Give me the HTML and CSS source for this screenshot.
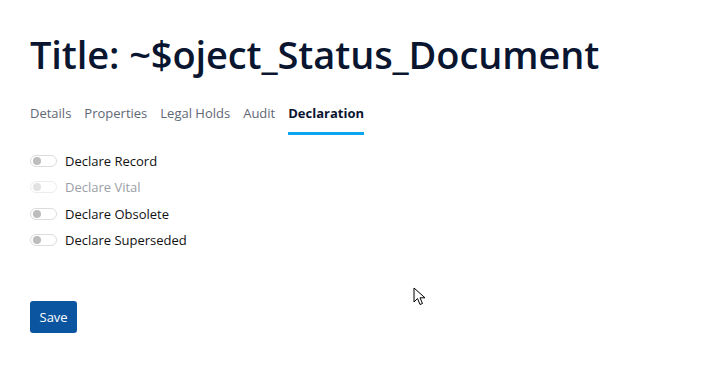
FILE: index.html
```html
<!DOCTYPE html>
<html lang="en">
<head>
<meta charset="UTF-8" />
<meta name="viewport" content="width=device-width, initial-scale=1" />
<title>Declaration</title>
<link rel="stylesheet" href="styles.css">
</head>
<body>

<div class="page">
  <h1 class="title">Title: ~$oject_Status_Document</h1>

  <div class="tabs">
    <span class="tab">Details</span>
    <span class="tab">Properties</span>
    <span class="tab">Legal Holds</span>
    <span class="tab">Audit</span>
    <span class="tab active">Declaration</span>
  </div>

  <div class="toggles">
    <label class="toggle-row"><span class="switch"></span>Declare Record</label>
    <label class="toggle-row disabled"><span class="switch"></span>Declare Vital</label>
    <label class="toggle-row"><span class="switch"></span>Declare Obsolete</label>
    <label class="toggle-row"><span class="switch"></span>Declare Superseded</label>
  </div>

  <button class="save-btn">Save</button>
</div>

<svg class="cursor" width="14" height="20" viewBox="0 0 14 20">
  <path d="M1 1 L1 15 L4.5 11.5 L7 17.5 L9.5 16.5 L7 10.8 L12 10.8 Z" fill="#fff" stroke="#000" stroke-width="1" stroke-linejoin="round"/>
</svg>

</body>
</html>
```

FILE: styles.css
```css
body {
  margin: 0;
  font-family: "Open Sans", "Noto Sans", sans-serif;
  background: #fff;
  color: #1b1b1b;
}
.page {
  padding: 28px 30px;
}
.title {
  font-size: 38px;
  font-weight: 600;
  line-height: 52px;
  margin: 0 0 24px;
  color: #0a1530;
  letter-spacing: -0.1px;
}
.tabs {
  display: flex;
  gap: 13px;
  font-size: 13px;
}
.tab {
  color: #5f6775;
  padding-bottom: 10px;
  border-bottom: 3px solid transparent;
}
.tab.active {
  color: #0a1530;
  font-weight: 700;
  border-bottom-color: #0ea5ef;
}
.toggles {
  display: flex;
  flex-direction: column;
  gap: 8.4px;
  margin-top: 17px;
}
.toggle-row {
  display: flex;
  align-items: center;
  gap: 8px;
  font-size: 13px;
  line-height: 18px;
  color: #111;
}
.toggle-row.disabled {
  color: #9aa0a6;
}
.switch {
  position: relative;
  width: 25px;
  height: 10px;
  border: 1px solid #dcdcdc;
  border-radius: 6px;
  background: #fff;
}
.switch::after {
  content: "";
  position: absolute;
  left: 2px;
  top: 1px;
  width: 8px;
  height: 8px;
  border-radius: 50%;
  background: #bdbdbd;
}
.disabled .switch {
  border-color: #ececec;
}
.disabled .switch::after {
  background: #e2e2e2;
}
.save-btn {
  margin-top: 52px;
  background: #0b55a0;
  color: #fff;
  border: none;
  border-radius: 3px;
  font-family: inherit;
  font-size: 13px;
  padding: 7px 9.5px;
  cursor: pointer;
}
.cursor {
  position: absolute;
  left: 413px;
  top: 287px;
}
```
